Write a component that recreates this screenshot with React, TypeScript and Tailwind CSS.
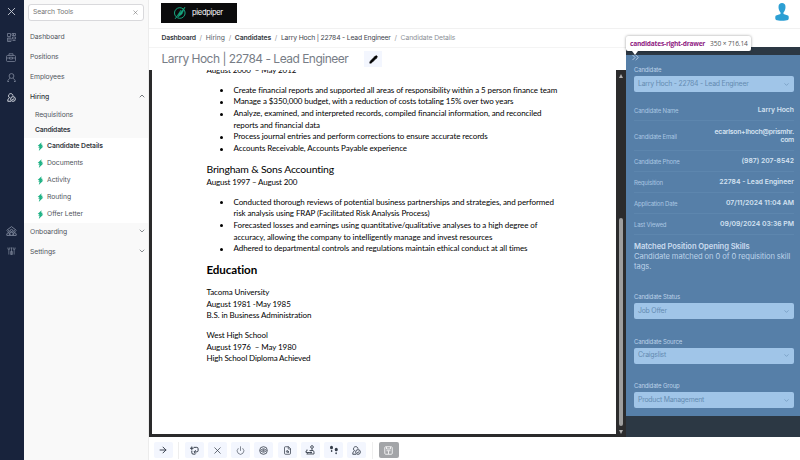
import React from "react";
import { ArrowRight, X, Power, FileSearch, ChevronDown, ChevronUp, Pencil, ChevronsRight } from "lucide-react";

const ui = "font-['Inter','Liberation_Sans',sans-serif]";

function Bolt() {
  return (
    <svg viewBox="0 0 8 10" className="h-[9px] w-[7px] shrink-0" fill="#1fb285">
      <path d="M5.200 0 .8 4.300 2.900 4.800 1.300 6.100 3 6.500 2 10 7.200 5.100 5.100 4.600 6.800 3.200 4.800 2.800Z" />
    </svg>
  );
}

function DashIcon() {
  return (
    <svg viewBox="0 0 18 18" className="h-[9px] w-[9px]" fill="none" stroke="currentColor" strokeWidth="1.500">
      <path d="M1 1h6v6H1zM10 1h7v4h-7zM1 10h7v7H1zM11 8h6v4h-6zM11 15h6M4 10v7M13 1v4" />
    </svg>
  );
}

function CaseIcon() {
  return (
    <svg viewBox="0 0 20 18" className="h-[9px] w-[10px]" fill="none" stroke="currentColor" strokeWidth="1.500">
      <rect x="1" y="5" width="18" height="12" rx="2" /><path d="M6 5V1.500h8V5M1 10h6M13 10h6M7 8.500h6v3.500H7z" />
    </svg>
  );
}

function PersonIcon() {
  return (
    <svg viewBox="0 0 18 18" className="h-[9px] w-[9px]" fill="none" stroke="currentColor" strokeWidth="1.700">
      <circle cx="9" cy="6" r="4.800" /><path d="M1.500 17c0-3 2-5 4.500-6.200M16.500 17c0-3-2-5-4.500-6.200M1 17h3M14 17h3" />
    </svg>
  );
}

function HireIcon() {
  return (
    <svg viewBox="0 0 18 18" className="h-[9px] w-[9px]" fill="none" stroke="currentColor" strokeWidth="1.800">
      <path d="M5 9.500A4.500 4.500 0 1 1 12 5.500M5 9.500C2.500 11 1.500 13 1.500 16.500H8" />
      <circle cx="12" cy="12" r="4.700" /><path d="m10 12 1.500 1.500L14.200 11" />
    </svg>
  );
}

function HouseIcon() {
  return (
    <svg viewBox="0 0 20 18" className="h-[10px] w-[11px]" fill="none" stroke="currentColor" strokeWidth="1.700">
      <path d="M1 8 10 1l9 7" /><circle cx="5" cy="10" r="1.700" /><circle cx="10" cy="8" r="2" /><circle cx="15" cy="10" r="1.700" />
      <path d="M1.500 17v-3l2-1.500h2L7 14v3zM7 17v-4l2-2h2l2 2v4zM13 17v-3l1.500-1.500h2l2 1.500v3z" />
    </svg>
  );
}

function ToolsIcon() {
  return (
    <svg viewBox="0 0 18 18" className="h-[8px] w-[9px]" fill="none" stroke="currentColor" strokeWidth="1.600">
      <path d="M1 1v4h4V1M3 5v12M7 2h4M9 2v15M7 10h4v7H7zM13 1v4h4V1M15 5v12" />
    </svg>
  );
}

function RouteIcon() {
  return (
    <svg viewBox="0 0 20 20" className="h-[10px] w-[10px]" fill="none" stroke="currentColor" strokeWidth="1.700">
      <circle cx="14" cy="4" r="2.700" /><path d="M14 7v4M9 11h7M4 9v3h-2v3h12M15 11a3 3 0 0 1 3 3v4H3M7 15l-3 2M12 13v4" />
    </svg>
  );
}

function CycleIcon() {
  return (
    <svg viewBox="0 0 20 20" className="h-[9px] w-[9px]" fill="none" stroke="currentColor" strokeWidth="2.200" strokeLinecap="round">
      <path d="M9 3h6c2 0 3 1 3 3v4c0 2-1 3-3 3h-4M12 10l-3 3 3 3M4 2v6M1 5h6M4 11v4c0 2 1 3 3 3h4" />
    </svg>
  );
}

function StepsIcon() {
  return (
    <svg viewBox="0 0 20 20" className="h-[10px] w-[10px]" fill="currentColor">
      <ellipse cx="5" cy="5" rx="3" ry="3.700" /><rect x="3.800" y="10" width="3" height="4" rx="1.500" />
      <ellipse cx="14.500" cy="9" rx="3" ry="3.700" /><rect x="12.700" y="14.500" width="3" height="4" rx="1.500" />
    </svg>
  );
}

function DiskIcon() {
  return (
    <svg viewBox="0 0 18 18" className="h-[9px] w-[9px]" fill="none" stroke="currentColor" strokeWidth="2">
      <rect x="1.500" y="1.500" width="15" height="15" rx="2" /><path d="M5 2v4h8V2M5 9.500h8M9 9.500V16" />
    </svg>
  );
}

function Rail() {
  return (
    <div className="flex w-[24px] shrink-0 flex-col items-center bg-[#18233c] pr-[2px] text-[#7d879b]">
      <div className="flex h-[22px] items-center text-[#c6cbd5]"><X size={13} strokeWidth={1.700} /></div>
      <div className="mt-[5px] flex h-[20px] items-center"><DashIcon /></div>
      <div className="flex h-[20px] items-center"><CaseIcon /></div>
      <div className="flex h-[20px] items-center"><PersonIcon /></div>
      <div className="flex h-[20px] items-center text-[#e4e8ee]"><HireIcon /></div>
      <div className="mt-[114px] flex h-[20px] items-center"><HouseIcon /></div>
      <div className="flex h-[20px] items-center"><ToolsIcon /></div>
    </div>
  );
}

function NavRow({ label, open, chevron }: { label: string; open?: boolean; chevron?: boolean }) {
  return (
    <div className={"flex h-[20px] items-center justify-between pl-[6px] pr-[2px] " + (open ? "font-medium text-[#333a41]" : "")}>
      <span>{label}</span>
      {chevron && (open ? <ChevronUp size={8} className="mb-[2px]" /> : <ChevronDown size={8} className="mb-[3px]" />)}
    </div>
  );
}

const children = ["Candidate Details", "Documents", "Activity", "Routing", "Offer Letter"];

function Sidebar() {
  return (
    <div className="w-[125px] shrink-0 border-r border-[#ececec] bg-[#f9f9f9] text-[6.800px] tracking-[-0.060px] text-[#50565d]">
      <div className="ml-[4px] mt-[4px] flex h-[17px] w-[116px] items-center justify-between rounded-[3px] border border-[#d9d9dc] bg-white px-[4px] text-[#777]">
        <span className="tracking-[-0.120px]">Search Tools</span><X size={7} />
      </div>
      <div className="mt-[6px]">
        <NavRow label="Dashboard" />
        <NavRow label="Positions" />
        <NavRow label="Employees" />
        <NavRow label="Hiring" open chevron />
      </div>
      <div className="mt-[1px] flex h-[15px] items-center pl-[11px]">Requisitions</div>
      <div className="flex h-[15px] items-center pl-[11px] font-semibold tracking-[-0.200px] text-[#33383e]">Candidates</div>
      <div className="bg-white">
        {children.map((c, i) => (
          <div key={c} className={"flex h-[17px] items-center gap-[3px] pl-[13px] " + (i === 0 ? "font-semibold tracking-[-0.120px] text-[#33383e]" : "")}>
            <Bolt /><span>{c}</span>
          </div>
        ))}
      </div>
      <div className="-mt-[1px]">
        <NavRow label="Onboarding" chevron />
        <NavRow label="Settings" chevron />
      </div>
    </div>
  );
}

function Header() {
  return (
    <div className="flex h-[29px] items-start justify-between border-b border-[#f1f1f1] pl-[12px] pr-[11px] pt-[3px]">
      <div className="flex h-[20px] w-[76px] items-center bg-[#0b0b0c] pl-[12px] text-[7.500px] text-white">
        <svg viewBox="0 0 14 14" className="mr-[5px] h-[14px] w-[14px]" fill="none" stroke="#16a67f">
          <circle cx="6.800" cy="7" r="5.300" /><path d="M2 13 12 1 9 8 5 11 8 4Z" fill="#16a67f" strokeWidth=".5" />
        </svg>
        <span className="tracking-[-0.300px]">piedpiper</span>
      </div>
      <svg viewBox="0 0 14 18" className="h-[18px] w-[14px]">
        <path d="M3.500 4C3.500 1 5 0 7 0s3.500 1 3.500 4c0 2.600-1 4.500-2 5.500v1.500l4.500 1.600c1 .5 1 4 0 4.400-2 .9-10 .9-12 0-1-.4-1-3.900 0-4.400L5.500 11V9.500C4.500 8.500 3.500 6.600 3.500 4Z" fill="#2c9fd3" />
      </svg>
    </div>
  );
}

function Crumbs() {
  const sep = <span className="px-[3.700px] text-[#999]">/</span>;
  return (
    <div className="flex h-[19px] items-center border-b border-[#f4f4f4] pl-[12.500px] pt-[1px] text-[6.800px] text-[#555c66]">
      <b className="font-semibold tracking-[-0.160px] text-[#33383e]">Dashboard</b>{sep}<span>Hiring</span>{sep}
      <b className="font-semibold tracking-[-0.100px] text-[#33383e]">Candidates</b>{sep}
      <span className="tracking-[-0.170px] text-[#3f454e]">Larry Hoch | 22784 - Lead Engineer</span>{sep}<span className="tracking-[-0.100px] text-[#8b8f96]">Candidate Details</span>
    </div>
  );
}

function Bullets({ items }: { items: string[][] }) {
  return (
    <ul>
      {items.map((lines) => (
        <li key={lines[0]} className="flex">
          <span className="ml-[13px] mt-[4.500px] h-[3px] w-[3px] shrink-0 rounded-full bg-black" />
          <div className="ml-[11px]">{lines.map((l) => <div key={l}>{l}</div>)}</div>
        </li>
      ))}
    </ul>
  );
}

function Resume() {
  return (
    <div className="h-[364px] overflow-hidden whitespace-nowrap pl-[54.500px] font-['Lato','Liberation_Sans',sans-serif] text-[8px] leading-[11.690px] tracking-[-0.090px] text-black">
      <div className="mt-[-5.500px]">August 2000 &nbsp;– May 2012</div>
      <div className="mt-[8.500px]">
        <Bullets items={[
          ["Create financial reports and supported all areas of responsibility within a 5 person finance team"],
          ["Manage a $350,000 budget, with a reduction of costs totaling 15% over two years"],
          ["Analyze, examined, and interpreted records, compiled financial information, and reconciled", "reports and financial data"],
          ["Process journal entries and perform corrections to ensure accurate records"],
          ["Accounts Receivable, Accounts Payable experience"],
        ]} />
      </div>
      <div className="mt-[7.500px] text-[10.400px] leading-[14px] tracking-[-0.170px]">Bringham &amp; Sons Accounting</div>
      <div className="pt-[0.500px] tracking-[-0.160px]">August 1997 – August 200</div>
      <div className="mt-[8px]">
        <Bullets items={[
          ["Conducted thorough reviews of potential business partnerships and strategies, and performed", "risk analysis using FRAP (Facilitated Risk Analysis Process)"],
          ["Forecasted losses and earnings using quantitative/qualitative analyses to a high degree of", "accuracy, allowing the company to intelligently manage and invest resources"],
          ["Adhered to departmental controls and regulations maintain ethical conduct at all times"],
        ]} />
      </div>
      <div className="mt-[7.500px] text-[11.600px] font-bold leading-[16px]">Education</div>
      <div className="mt-[8.500px]">Tacoma University</div>
      <div>August 1981 -May 1985</div>
      <div>B.S. in Business Administration</div>
      <div className="mt-[8px]">West High School</div>
      <div>August 1976 &nbsp;– May 1980</div>
      <div className="tracking-[-0.140px]">High School Diploma Achieved</div>
    </div>
  );
}

function Select({ label, value, className }: { label: string; value: string; className: string }) {
  return (
    <div className={className}>
      <div className="h-[9px] text-[6px] leading-[9px] tracking-[-0.160px]">{label}</div>
      <div className="mt-[2px] flex h-[16px] items-center justify-between rounded-[2px] bg-[#a0c5e8] px-[4px] text-[6.900px] tracking-[-0.220px] text-[#648bb1]">
        <span>{value}</span><ChevronDown size={7} />
      </div>
    </div>
  );
}

const facts: [string, string, string][] = [
  ["Candidate Name", "Larry Hoch", "h-[21px]"],
  ["Candidate Email", "ecarlson+lhoch@prismhr.\ncom", "h-[30px]"],
  ["Candidate Phone", "(987) 207-8542", "h-[21px]"],
  ["Requisition", "22784 - Lead Engineer", "h-[21px]"],
  ["Application Date", "07/11/2024 11:04 AM", "h-[21px]"],
  ["Last Viewed", "09/09/2024 03:36 PM", "h-[21px]"],
];

function Drawer() {
  return (
    <div className="relative w-[174px] bg-[#2c3844] pt-[8px]">
      <div className="h-[361px] bg-[#567fa8] pl-[8px] pr-[6px] text-[#bcd2e9]">
        <div className="flex h-[10px] items-start"><ChevronsRight size={11} strokeWidth={2} className="-ml-[4px] -mt-[3px]" /></div>
        <Select label="Candidate" value="Larry Hoch - 22784 - Lead Engineer" className="" />
        <div className="mt-[8px]">
          {facts.map(([k, v, h]) => (
            <div key={k} className={"flex items-center justify-between border-b border-[#5d86ae] pt-[1px] " + h}>
              <span className="text-[6px] tracking-[-0.200px] text-[#aac6e2]">{k}</span>
              <span className="whitespace-pre text-right text-[6.800px] font-semibold leading-[8.500px] text-[#d4e2f1]">
                {v.includes("@") ? <span className="tracking-[-0.260px]">{v}</span> : v}
              </span>
            </div>
          ))}
        </div>
        <div className="mt-[7px] text-[7.600px] leading-[10px]">
          <div className="font-semibold tracking-[-0.080px] text-[#cbdcef]">Matched Position Opening Skills</div>
          <div className="whitespace-nowrap tracking-[-0.080px]">Candidate matched on 0 of 0 requisition skill<br />tags.</div>
        </div>
        <Select label="Candidate Status" value="Job Offer" className="mt-[20px]" />
        <Select label="Candidate Source" value="Craigslist" className="mt-[17.500px]" />
        <Select label="Candidate Group" value="Product Management" className="mt-[17.500px]" />
      </div>
      <div className="absolute left-0 top-[-11px] flex h-[15px] w-[125px] items-center gap-[5px] whitespace-nowrap rounded-[2px] bg-white pl-[4px] pt-[1px] font-['Open_Sans',sans-serif] text-[6.600px] tracking-[-0.210px] text-[#555] shadow-[0_0_3px_rgba(0,0,0,0.4)]">
        <b className="text-[#8f1a83]">candidates-right-drawer</b><span className="tracking-[-0.120px]">350 × 716.14</span>
        <span className="absolute left-[6px] top-[15px] border-x-[3px] border-t-[4px] border-x-transparent border-t-white" />
      </div>
    </div>
  );
}

function Btn({ children }: { children: React.ReactNode }) {
  return <div className="flex h-[16px] w-[19px] items-center justify-center rounded-[2px] bg-[#f3f6fe] text-[#343c49]">{children}</div>;
}

function BottomBar() {
  return (
    <div className="flex h-[23px] items-center gap-[4.200px] pl-[4.500px] pt-[3px]">
      <Btn><ArrowRight size={10} strokeWidth={2.300} /></Btn>
      <div className="mx-[1.500px] h-[17px] w-px bg-[#eee]" />
      <Btn><CycleIcon /></Btn>
      <Btn><X size={11} strokeWidth={1.600} /></Btn>
      <Btn><Power size={9} strokeWidth={1.600} /></Btn>
      <Btn>
        <svg viewBox="0 0 20 20" className="h-[9px] w-[9px]" fill="none" stroke="currentColor" strokeWidth="1.800"><circle cx="10" cy="10" r="8.500" /><path d="M3.500 10q6.500-7.500 13 0-6.500 7.500-13 0Z" /><circle cx="10" cy="10" r="1.500" /></svg>
      </Btn>
      <Btn><FileSearch size={9} /></Btn>
      <Btn><RouteIcon /></Btn>
      <Btn><StepsIcon /></Btn>
      <Btn><HireIcon /></Btn>
      <div className="mx-[1.500px] h-[17px] w-px bg-[#eee]" />
      <div className="flex h-[16px] w-[20px] items-center justify-center rounded-[2px] bg-[#a3a5a8] text-[#eeeeef]"><DiskIcon /></div>
    </div>
  );
}

export default function App() {
  return (
    <div className={"flex h-[460px] w-[800px] overflow-hidden bg-white " + ui}>
      <Rail />
      <Sidebar />
      <div className="flex w-[651px] flex-col">
        <Header />
        <div className="flex h-[408px]">
          <div className="w-[477px]">
            <Crumbs />
            <div className="flex h-[22px] items-center pl-[12.500px] text-[12px] tracking-[-0.510px] text-[#777d86]">
              <span className="leading-[14px]">Larry Hoch | 22784 - Lead Engineer</span>
              <div className="ml-[16px] flex h-[16px] w-[18px] items-center justify-center bg-[#f3f6fe] text-black"><Pencil size={9} fill="currentColor" /></div>
            </div>
            <div className="flex h-[367px] border-b-[3px] border-l-[3px] border-[#2a2a2b]">
              <div className="w-[464px] overflow-hidden"><Resume /></div>
              <div className="flex w-[10px] flex-col items-center bg-[#2b2b2c] pt-[4px]">
                <span className="border-x-[2.500px] border-b-[4px] border-x-transparent border-b-[#b0b0b0]" />
                <span className="mt-[140px] h-[208px] w-[4px] rounded-[2px] bg-[#9e9e9e]" />
                <span className="mt-[4px] border-x-[2.500px] border-t-[4px] border-x-transparent border-t-[#b0b0b0]" />
              </div>
            </div>
          </div>
          <div className="pt-[18px]"><Drawer /><div className="h-[21px] bg-[#2c3844]" /></div>
        </div>
        <BottomBar />
      </div>
    </div>
  );
}
